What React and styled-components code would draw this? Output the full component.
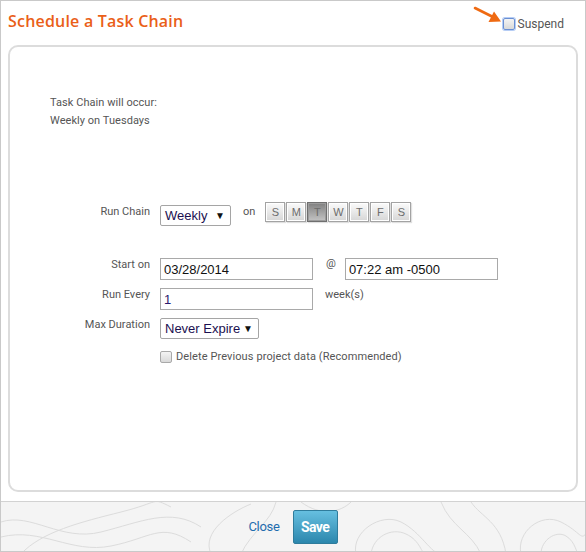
import React from "react";
import styled, { createGlobalStyle } from "styled-components";

const GlobalStyle = createGlobalStyle`
  html, body {
    margin: 0;
    padding: 0;
    background: #fff;
  }
  * {
    box-sizing: border-box;
  }
`;

const Dialog = styled.div`
  position: relative;
  width: 586px;
  height: 552px;
  border: 1px solid #c9c9c9;
  display: flex;
  flex-direction: column;
  font-family: Roboto, "Liberation Sans", sans-serif;
  background: #fff;
`;

const Header = styled.div`
  position: relative;
  height: 44px;
  display: flex;
  justify-content: space-between;
  align-items: flex-start;
  padding: 0 21px 0 7px;
`;

const Title = styled.h1`
  margin: 9px 0 0;
  font-family: "Open Sans", sans-serif;
  font-weight: 600;
  font-size: 16px;
  letter-spacing: 0.2px;
  color: #ea5f19;
`;

const SuspendLabel = styled.label`
  display: flex;
  align-items: center;
  gap: 3px;
  margin-top: 16px;
  font-size: 12px;
  color: #555;
`;

const Check = styled.span`
  display: inline-block;
  width: 12px;
  height: 12px;
  border-radius: 2px;
  border: 1px solid ${(p) => (p.focus ? "#6a8fd3" : "#a9a9a9")};
  background: linear-gradient(#f4f4f4, #d9d9d9);
  box-shadow: ${(p) => (p.focus ? "0 0 0 1px #b6cdf5" : "none")};
`;

const Arrow = styled.svg`
  position: absolute;
  left: 472px;
  top: 5px;
`;

const Card = styled.div`
  margin: 0 7px;
  height: 447px;
  border: 2px solid #dcdcdc;
  border-radius: 10px;
  padding: 47px 0 0 40px;
`;

const Summary = styled.div`
  font-size: 11px;
  line-height: 18px;
  letter-spacing: 0.05px;
  color: #555;
`;

const Form = styled.div`
  margin-top: 75px;
  margin-left: -40px;
  display: flex;
  flex-direction: column;
`;

const Row = styled.div`
  display: flex;
  align-items: flex-start;
  margin-top: ${(p) => p.mt || 0}px;
`;

const Label = styled.div`
  width: 140px;
  text-align: right;
  font-size: 11px;
  line-height: 14px;
  color: #555;
  margin-right: 10px;
`;

const Note = styled.span`
  font-size: 11px;
  line-height: 14px;
  color: #555;
  margin: ${(p) => p.m || "0"};
`;

const SelectBox = styled.div`
  display: flex;
  align-items: center;
  justify-content: space-between;
  width: ${(p) => p.w}px;
  height: 21px;
  border: 1px solid #a5a5a5;
  border-radius: 2px;
  padding: 0 5px 0 4px;
  font-family: "Liberation Sans", Arial, sans-serif;
  font-size: 13px;
  color: #1b1050;
  background: #fff;
  &::after {
    content: "▼";
    font-size: 10px;
    color: #111;
  }
`;

const Days = styled.div`
  display: flex;
  gap: 1px;
  margin-top: -3px;
`;

const Day = styled.span`
  width: 20px;
  height: 20px;
  display: flex;
  align-items: center;
  justify-content: center;
  font-family: "Liberation Sans", Arial, sans-serif;
  font-size: 11px;
  color: #6c6c6c;
  border: 1px solid ${(p) => (p.active ? "#6f6f6f" : "#a3a3a3")};
  background: ${(p) =>
    p.active
      ? "linear-gradient(#808080, #c4c4c4)"
      : "linear-gradient(#fbfbfb, #d6d6d6)"};
  box-shadow: inset 0 0 0 1px ${(p) => (p.active ? "#9c9c9c" : "#fff")},
    1px 1px 1px rgba(0, 0, 0, 0.12);
`;

const TextInput = styled.input`
  width: 153px;
  height: 22px;
  border: 1px solid #a9a9a9;
  border-radius: 0;
  padding: 0 3px;
  font-family: "Liberation Sans", Arial, sans-serif;
  font-size: 13px;
  color: #111;
  outline: none;
  &[data-indigo] {
    color: #2a1a6e;
  }
`;

const CheckRow = styled.label`
  display: flex;
  align-items: center;
  gap: 4px;
  margin-left: 150px;
  margin-top: 11px;
  font-size: 11px;
  letter-spacing: 0.1px;
  color: #555;
`;

const Footer = styled.div`
  position: relative;
  margin-top: 9px;
  flex: 1;
  border-top: 1px solid #d2d2d2;
  background: #f4f4f4;
  overflow: hidden;
  display: flex;
  justify-content: center;
  align-items: center;
  gap: 13px;
`;

const Topo = styled.svg`
  position: absolute;
  left: 0;
  top: 0;
`;

const CloseLink = styled.a`
  position: relative;
  font-size: 13px;
  color: #1f6cae;
  text-decoration: none;
  letter-spacing: -0.3px;
`;

const SaveButton = styled.button`
  position: relative;
  width: 45px;
  height: 34px;
  border: 1px solid #2f7c9c;
  border-radius: 2px;
  background: linear-gradient(#66bfe0, #2c87ad);
  color: #fff;
  font-family: Roboto, "Liberation Sans", sans-serif;
  font-weight: 700;
  font-size: 14px;
  letter-spacing: -0.6px;
  padding: 0;
`;

const days = ["S", "M", "T", "W", "T", "F", "S"];

export default function App() {
  return (
    <>
      <GlobalStyle />
      <Dialog>
        <Header>
          <Title>Schedule a Task Chain</Title>
          <SuspendLabel>
            <Check focus />
            Suspend
          </SuspendLabel>
          <Arrow width="30" height="20" viewBox="0 0 30 20">
            <line x1="2" y1="2" x2="20" y2="11" stroke="#ef6a12" strokeWidth="2.6" strokeLinecap="round" />
            <polygon points="28,15.5 15.5,16 21,5.5" fill="#ef6a12" />
          </Arrow>
        </Header>

        <Card>
          <Summary>
            Task Chain will occur:
            <br />
            Weekly on Tuesdays
          </Summary>

          <Form>
            <Row>
              <Label>Run Chain</Label>
              <SelectBox w={71}>Weekly</SelectBox>
              <Note m="0 10px 0 12px">on</Note>
              <Days>
                {days.map((d, i) => (
                  <Day key={i} active={i === 2}>
                    {d}
                  </Day>
                ))}
              </Days>
            </Row>

            <Row mt={32}>
              <Label>Start on</Label>
              <TextInput defaultValue="03/28/2014" />
              <Note m="-1px 9px 0 13px">@</Note>
              <TextInput defaultValue="07:22 am -0500" />
            </Row>

            <Row mt={8}>
              <Label>Run Every</Label>
              <TextInput data-indigo defaultValue="1" />
              <Note m="0 0 0 12px">week(s)</Note>
            </Row>

            <Row mt={8}>
              <Label>Max Duration</Label>
              <SelectBox w={99}>Never Expire</SelectBox>
            </Row>

            <CheckRow>
              <Check />
              Delete Previous project data (Recommended)
            </CheckRow>
          </Form>
        </Card>

        <Footer>
          <Topo width="586" height="52" viewBox="0 0 586 52" fill="none" stroke="#dcdcdc" strokeWidth="1">
            <path d="M0 20 C30 10 60 40 100 30 S170 5 200 25" />
            <path d="M0 35 C40 25 70 52 110 44 S160 20 190 40" />
            <path d="M20 52 C40 30 80 20 120 10 S150 -5 170 5" />
            <path d="M210 52 C200 30 230 10 250 2" />
            <path d="M240 52 C250 30 270 20 275 0" />
            <path d="M355 52 C350 30 380 10 400 20 S430 52 440 52" />
            <path d="M370 52 C372 35 390 25 405 32 S420 52 425 52" />
            <path d="M440 0 C450 25 470 30 480 52" />
            <path d="M470 0 C480 15 500 20 505 52" />
            <path d="M520 52 C515 30 540 10 560 20 S580 40 586 30" />
            <path d="M540 52 C540 38 555 28 565 34 S575 52 578 52" />
            <path d="M300 0 C320 15 340 10 350 0" />
          </Topo>
          <CloseLink href="#">Close</CloseLink>
          <SaveButton>Save</SaveButton>
        </Footer>
      </Dialog>
    </>
  );
}
